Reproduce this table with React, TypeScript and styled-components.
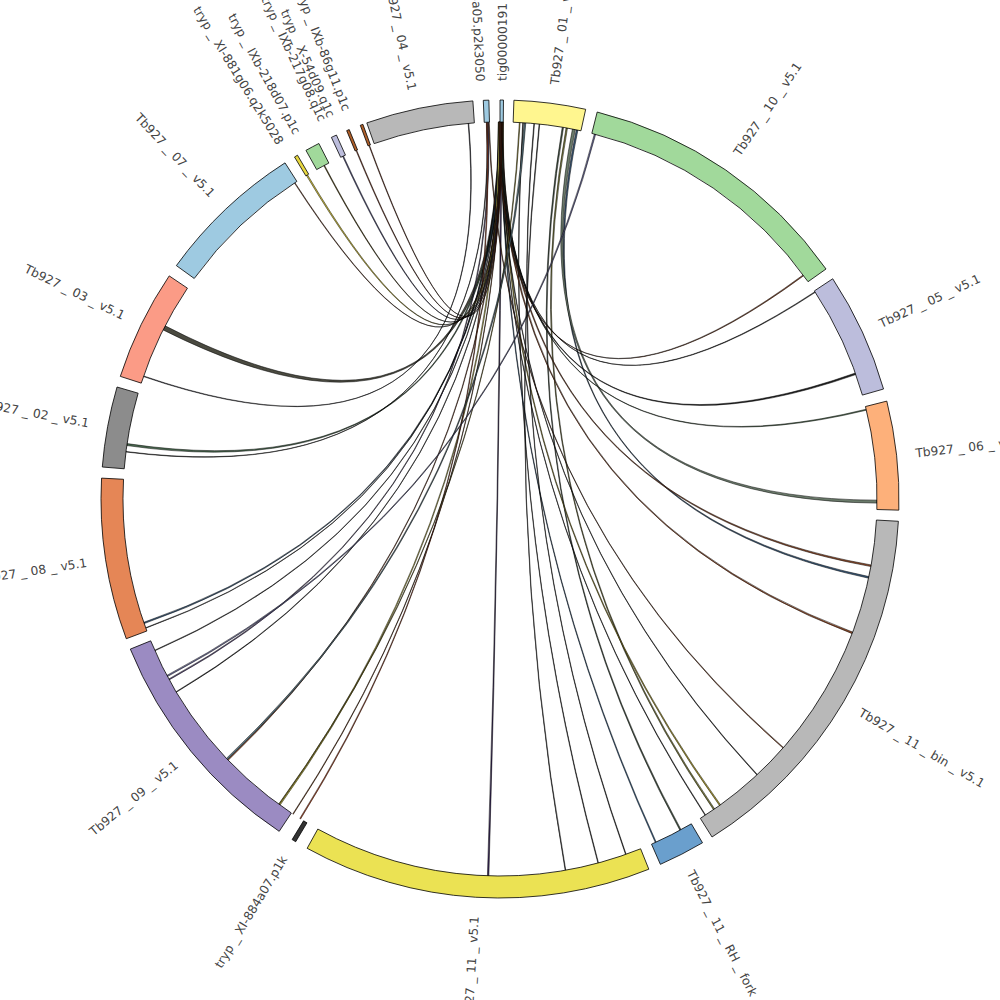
import React from 'react';
import styled, { createGlobalStyle } from 'styled-components';

// geometry of the circle
const CX = 500;
const CY = 499;
const R_OUT = 399;
const R_IN = 377;
const R_LABEL = 418;

type Segment = { name: string; from: number; to: number; color: string; labelAt?: number };

// angles in degrees, clockwise from the top
const segments: Segment[] = [
  { name: 'Tb927_01_v5.1', from: 2.0, to: 12.4, color: '#fff68f', labelAt: 7.5 },
  { name: 'Tb927_10_v5.1', from: 14.1, to: 54.8, color: '#a1d99b' },
  { name: 'Tb927_05_v5.1', from: 56.5, to: 74.0, color: '#bcbddc' },
  { name: 'Tb927_06_v5.1', from: 75.8, to: 91.6, color: '#fdb07a' },
  { name: 'Tb927_11_bin_v5.1', from: 93.2, to: 147.9, color: '#b8b8b8' },
  { name: 'Tb927_11_RH_fork', from: 149.5, to: 156.3, color: '#6a9fcd' },
  { name: 'Tb927_11_v5.1', from: 158.1, to: 208.9, color: '#ebe253' },
  { name: 'tryp_XI-884a07.p1k', from: 210.8, to: 211.4, color: '#333333' },
  { name: 'Tb927_09_v5.1', from: 213.6, to: 247.9, color: '#9b8bc2' },
  { name: 'Tb927_08_v5.1', from: 249.5, to: 273.0, color: '#e58656' },
  { name: 'Tb927_02_v5.1', from: 274.6, to: 286.3, color: '#8c8c8c' },
  { name: 'Tb927_03_v5.1', from: 287.9, to: 304.0, color: '#fb9b86' },
  { name: 'Tb927_07_v5.1', from: 305.8, to: 327.4, color: '#9ecae1' },
  { name: 'tryp_XI-881g06.q2k5028', from: 329.0, to: 329.5, color: '#e8d840', labelAt: 328.3 },
  { name: 'tryp_IXb-218d07.p1c', from: 330.9, to: 333.0, color: '#a1d99b', labelAt: 331.0 },
  { name: 'tryp_IXb-217g08.q1c', from: 335.0, to: 335.8, color: '#bcbddc', labelAt: 334.9 },
  { name: 'tryp_X-54d09.q1c', from: 337.4, to: 337.8, color: '#b0602a', labelAt: 336.2 },
  { name: 'tryp_IXb-86g11.p1c', from: 339.5, to: 339.9, color: '#b0602a', labelAt: 338.5 },
  { name: 'Tb927_04_v5.1', from: 340.5, to: 356.1, color: '#b8b8b8', labelAt: 347.9 },
  { name: 'tryp_XI-83a05.p2k3050', from: 357.6, to: 358.4, color: '#9ecae1', labelAt: 357.3 },
  { name: 'tig00000191', from: 0.0, to: 0.5, color: '#9ecae1', labelAt: 0.3 },
];

// [source angle, target angle, width in degrees, fill]
const links: [number, number, number, string][] = [
  [0.1, 297, 0.7, '#4a4a40'],
  [355.2, 289, 0.1, '#3a3a4a'],
  [0.3, 278.3, 0.3, '#4a6a50'],
  [358.0, 277.2, 0.08, '#333'],
  [0.0, 250.8, 0.2, '#3a5a7a'],
  [359.8, 250.0, 0.08, '#333'],
  [0.2, 246.3, 0.1, '#333'],
  [358.2, 241.4, 0.15, '#6a5a8a'],
  [0.4, 239.2, 0.1, '#333'],
  [0.1, 226.2, 0.15, '#b0603a'],
  [359.9, 215.8, 0.22, '#d8d060'],
  [0.3, 213.3, 0.1, '#8b4513'],
  [358.0, 212.0, 0.15, '#c0502a'],
  [0.2, 181.8, 0.22, '#3b2a5a'],
  [3.5, 164.9, 0.1, '#333'],
  [0.3, 155.6, 0.15, '#3a6a9a'],
  [9.6, 151.4, 0.2, '#445544'],
  [0.1, 147.0, 0.1, '#333'],
  [10.2, 145.4, 0.22, '#7a7a3a'],
  [0.4, 144.3, 0.2, '#b0a030'],
  [0.2, 137.0, 0.1, '#333'],
  [358.3, 131.3, 0.12, '#8b4a2a'],
  [0.1, 110.8, 0.25, '#8b4a2a'],
  [11.8, 102.0, 0.25, '#3a5a7a'],
  [0.3, 100.2, 0.25, '#8b4a2a'],
  [11.3, 90.4, 0.45, '#6a7a6a'],
  [0.2, 76.3, 0.15, '#5a7a5a'],
  [0.0, 70.6, 0.25, '#222'],
  [0.4, 56.7, 0.12, '#333'],
  [359.9, 53.6, 0.15, '#8b4a2a'],
  [329.2, 0.2, 0.2, '#d8c840'],
  [332.2, 0.3, 0.12, '#6b5a20'],
  [335.4, 0.1, 0.15, '#5a5a8a'],
  [337.6, 0.2, 0.12, '#8b3a20'],
  [339.7, 0.3, 0.1, '#8b3a20'],
  [327.0, 0.1, 0.1, '#8b4a2a'],
  [3.0, 215.9, 0.12, '#b0a030'],
  [3.8, 226.4, 0.25, '#56707a'],
  [14.6, 242.0, 0.2, '#6a6a9a'],
  [6.0, 170.0, 0.1, '#333'],
  [5.2, 160.5, 0.1, '#333'],
];

const pt = (r: number, deg: number) => {
  const a = (deg * Math.PI) / 180;
  return `${(CX + r * Math.sin(a)).toFixed(2)} ${(CY - r * Math.cos(a)).toFixed(2)}`;
};

function segmentPath(from: number, to: number) {
  const large = to - from > 180 ? 1 : 0;
  return (
    `M ${pt(R_OUT, from)} A ${R_OUT} ${R_OUT} 0 ${large} 1 ${pt(R_OUT, to)} ` +
    `L ${pt(R_IN, to)} A ${R_IN} ${R_IN} 0 ${large} 0 ${pt(R_IN, from)} Z`
  );
}

function ribbonPath(s: number, t: number, w: number) {
  const h = w / 2;
  return (
    `M ${pt(R_IN, s - h)} A ${R_IN} ${R_IN} 0 0 1 ${pt(R_IN, s + h)} ` +
    `Q ${CX} ${CY} ${pt(R_IN, t - h)} A ${R_IN} ${R_IN} 0 0 1 ${pt(R_IN, t + h)} ` +
    `Q ${CX} ${CY} ${pt(R_IN, s - h)} Z`
  );
}

const GlobalStyle = createGlobalStyle`
  html, body {
    margin: 0;
    padding: 0;
    background: #ffffff;
  }
`;

const Page = styled.div`
  width: 1000px;
  height: 1000px;
  overflow: hidden;
  background: #ffffff;
`;

const Chart = styled.svg`
  display: block;
  width: 1000px;
  height: 1000px;
`;

const SegmentArc = styled.path`
  stroke: #000;
  stroke-width: 0.8;
`;

const Link = styled.path`
  stroke: #000;
  stroke-width: 0.5;
`;

const Label = styled.text<{ $anchor: 'start' | 'end' }>`
  font-family: 'DejaVu Sans', 'Liberation Sans', sans-serif;
  font-size: 12.2px;
  fill: #444444;
  text-anchor: ${(p) => p.$anchor};
`;

// the names are shown with some air round each underscore
const LabelText = ({ name }: { name: string }) => {
  const parts = name.split('_');
  return (
    <>
      {parts.map((part, i) =>
        i === 0 ? (
          <tspan key={i}>{part}</tspan>
        ) : (
          <React.Fragment key={i}>
            <tspan dx={4.3}>_</tspan>
            <tspan dx={4.3}>{part}</tspan>
          </React.Fragment>
        )
      )}
    </>
  );
};

const SegmentLabel = ({ seg }: { seg: Segment }) => {
  const angle = seg.labelAt ?? (seg.from + seg.to) / 2;
  const rightSide = angle < 180;
  const rot = rightSide ? angle - 90 : angle + 90;
  return (
    <Label
      $anchor={rightSide ? 'start' : 'end'}
      transform={`translate(${pt(R_LABEL, angle).replace(' ', ',')}) rotate(${rot})`}
      dy="0.35em"
    >
      <LabelText name={seg.name} />
    </Label>
  );
};

export default function App() {
  return (
    <Page>
      <GlobalStyle />
      <Chart viewBox="0 0 1000 1000">
        <g>
          {links.map(([s, t, w, c], i) => (
            <Link key={i} d={ribbonPath(s, t, w)} fill={c} />
          ))}
        </g>
        <g>
          {segments.map((seg) => (
            <SegmentArc key={seg.name} d={segmentPath(seg.from, seg.to)} fill={seg.color} />
          ))}
        </g>
        <g>
          {segments.map((seg) => (
            <SegmentLabel key={seg.name} seg={seg} />
          ))}
        </g>
      </Chart>
    </Page>
  );
}
